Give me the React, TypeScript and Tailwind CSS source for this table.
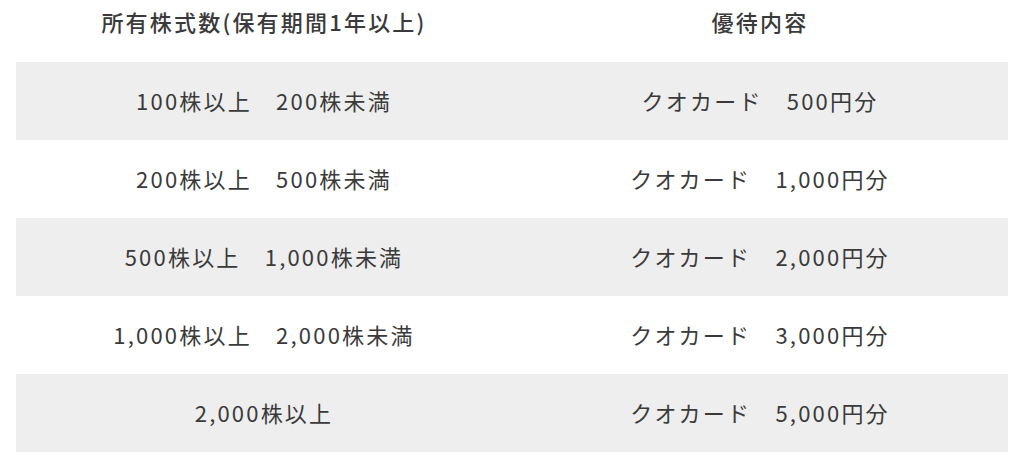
import React from "react";

const rows: [string, string][] = [
  ["100株以上　200株未満", "クオカード　500円分"],
  ["200株以上　500株未満", "クオカード　1,000円分"],
  ["500株以上　1,000株未満", "クオカード　2,000円分"],
  ["1,000株以上　2,000株未満", "クオカード　3,000円分"],
  ["2,000株以上", "クオカード　5,000円分"],
];

export default function App() {
  return (
    <div
      className="w-[1024px] h-[465px] bg-white text-[#3a3a3a] px-4"
      style={{ fontFamily: '"Noto Sans CJK JP", "Noto Sans", sans-serif' }}
    >
      <div className="grid grid-cols-2 h-[62px] pb-[19px] items-center text-[22px] font-medium tracking-[0.1em]">
        <div className="text-center">所有株式数(保有期間1年以上)</div>
        <div className="text-center">優待内容</div>
      </div>
      {rows.map((r, i) => (
        <div
          key={i}
          className={
            "grid grid-cols-2 h-[78px] pb-[2px] items-center text-[22px] tracking-[0.1em] " +
            (i % 2 === 0 ? "bg-[#eeeeee]" : "bg-white")
          }
        >
          <div className="text-center">{r[0]}</div>
          <div className="text-center">{r[1]}</div>
        </div>
      ))}
    </div>
  );
}
